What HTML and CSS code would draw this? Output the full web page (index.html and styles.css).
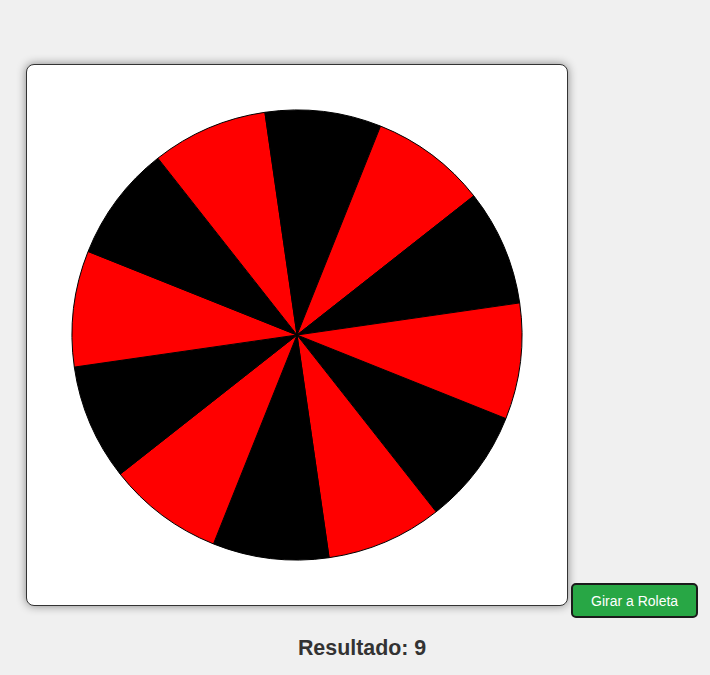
FILE: index.html
```html
<!DOCTYPE html>
<html lang="pt">
<head>
<meta charset="utf-8">
<title>Roleta</title>
<link rel="stylesheet" href="styles.css">
</head>
<body>
<div class="page">
  <div class="stage">
    <div class="row">
      <div class="board">
        <svg class="wheel" width="540" height="540" viewBox="0 0 540 540">
          <g stroke="#000" stroke-width="1">
            <path fill="#000" d="M270 270 L478.91 353.56 A225 225 0 0 1 409.14 446.82 Z"/>
            <path fill="#f00" d="M270 270 L409.14 446.82 A225 225 0 0 1 302.09 492.70 Z"/>
            <path fill="#000" d="M270 270 L302.09 492.70 A225 225 0 0 1 186.44 478.91 Z"/>
            <path fill="#f00" d="M270 270 L186.44 478.91 A225 225 0 0 1 93.18 409.14 Z"/>
            <path fill="#000" d="M270 270 L93.18 409.14 A225 225 0 0 1 47.30 302.09 Z"/>
            <path fill="#f00" d="M270 270 L47.30 302.09 A225 225 0 0 1 61.09 186.44 Z"/>
            <path fill="#000" d="M270 270 L61.09 186.44 A225 225 0 0 1 130.86 93.18 Z"/>
            <path fill="#f00" d="M270 270 L130.86 93.18 A225 225 0 0 1 237.91 47.30 Z"/>
            <path fill="#000" d="M270 270 L237.91 47.30 A225 225 0 0 1 353.56 61.09 Z"/>
            <path fill="#f00" d="M270 270 L353.56 61.09 A225 225 0 0 1 446.82 130.86 Z"/>
            <path fill="#000" d="M270 270 L446.82 130.86 A225 225 0 0 1 492.70 237.91 Z"/>
            <path fill="#f00" d="M270 270 L492.70 237.91 A225 225 0 0 1 478.91 353.56 Z"/>
          </g>
        </svg>
      </div>
      <button class="spin" type="button">Girar a Roleta</button>
    </div>
    <div class="result">Resultado: 9</div>
  </div>
</div>
</body>
</html>
```

FILE: styles.css
```css
html, body {
  margin: 0;
  padding: 0;
  background: #f0f0f0;
  font-family: "Liberation Sans", Arial, sans-serif;
}

.page {
  padding: 64px 0 0 26px;
}

.stage {
  display: inline-block;
}

.row {
  display: flex;
  align-items: flex-end;
  gap: 3px;
}

.board {
  width: 540px;
  height: 540px;
  background: #fff;
  border: 1px solid #333;
  border-radius: 8px;
  box-shadow: 0 0 10px rgba(0, 0, 0, 0.45);
}

.wheel {
  display: block;
}

.spin {
  box-sizing: border-box;
  height: 35px;
  padding: 0 18px;
  margin-bottom: -12px;
  background: #28a745;
  color: #fff;
  border: 2px solid #1b1b1b;
  border-radius: 5px;
  font-family: "Liberation Sans", Arial, sans-serif;
  font-size: 14px;
  cursor: pointer;
}

.result {
  margin-top: 30px;
  text-align: center;
  font-size: 21.4px;
  font-weight: bold;
  color: #333;
}
```
